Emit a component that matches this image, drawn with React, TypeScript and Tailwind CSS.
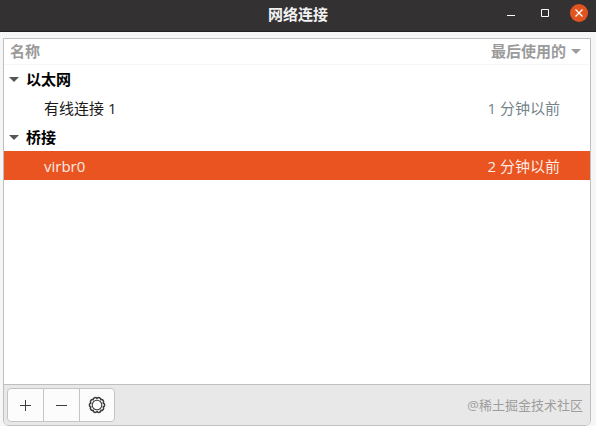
import React from 'react';

interface Connection {
    name: string;
    lastUsed: string;
}

interface ConnectionGroup {
    label: string;
    connections: Connection[];
}

const groups: ConnectionGroup[] = [
    { label: '以太网', connections: [{ name: '有线连接 1', lastUsed: '1 分钟以前' }] },
    { label: '桥接', connections: [{ name: 'virbr0', lastUsed: '2 分钟以前' }] }
];

const SELECTED = 'virbr0';

const Arrow: React.FC<{ className?: string }> = ({ className }) => (
    <svg viewBox="0 0 10 6" className={`w-[10px] h-[6px] shrink-0 ${className ?? ''}`} fill="currentColor" aria-hidden="true">
        <path d="M0 1h10L5 6z" />
    </svg>
);

const GearIcon = () => {
    // scalloped rim around an inner ring
    const teeth = Array.from({ length: 10 }, (_, i) => {
        const a = (i * Math.PI) / 5 + Math.PI / 10;
        return { x: 9 + 6.6 * Math.cos(a), y: 9 + 6.6 * Math.sin(a) };
    });
    const outline = teeth
        .map((p, i) => (i === 0 ? `M${p.x} ${p.y}` : `A2.2 2.2 0 0 1 ${p.x} ${p.y}`))
        .join(' ') + ` A2.2 2.2 0 0 1 ${teeth[0].x} ${teeth[0].y}Z`;

    return (
        <svg viewBox="0 0 18 18" className="size-[18px]" fill="none" stroke="#3d3d3d" aria-hidden="true">
            <path d={outline} strokeWidth="1.5" />
            <circle cx="9" cy="9" r="4.8" strokeWidth="1.1" />
        </svg>
    );
};

const TitleBar = () => (
    <header className="h-8 shrink-0 grid grid-cols-[1fr_auto_1fr] items-center bg-[#333132] border-b border-[#201e1f] text-white">
        <h1 className="col-start-2 text-[15px] leading-5 font-bold text-[#f2f2f2] pb-1">网络连接</h1>
        <div className="flex justify-end items-center gap-4 pr-2 pb-[5px]">
            <button aria-label="最小化" className="size-[18px] flex items-center justify-center">
                <svg viewBox="0 0 18 18" className="size-[18px]" aria-hidden="true">
                    <path d="M5 11.5h8" stroke="#fff" />
                </svg>
            </button>
            <button aria-label="最大化" className="size-[18px] flex items-center justify-center">
                <svg viewBox="0 0 18 18" className="size-[18px]" fill="none" aria-hidden="true">
                    <path d="M5.5 5.5h7v7h-7z" stroke="#fff" />
                </svg>
            </button>
            <button aria-label="关闭" className="size-[18px] flex items-center justify-center rounded-full bg-[#e2541f]">
                <svg viewBox="0 0 18 18" className="size-[18px]" aria-hidden="true">
                    <path d="M5.5 5.5l7 7M12.5 5.5l-7 7" stroke="#fff" strokeWidth="1.3" />
                </svg>
            </button>
        </div>
    </header>
);

const ConnectionTable = () => (
    <table className="w-full border-collapse">
        <thead>
            <tr className="h-[25px] text-[#9b9b9b] border-b border-[#f6f6f6]">
                <th className="p-0 pl-[6px] text-left font-bold">名称</th>
                <th className="p-0 pr-[9px] font-bold">
                    <button className="flex items-center gap-[5px] ml-auto font-bold">
                        最后使用的
                        <Arrow />
                    </button>
                </th>
            </tr>
        </thead>
        {groups.map(group => (
            <tbody key={group.label}>
                <tr className="h-[29px]">
                    <th colSpan={2} className="p-0 pl-[5px] font-bold text-black">
                        <button className="flex items-center gap-[7px] font-bold">
                            <Arrow className="text-[#555]" />
                            {group.label}
                        </button>
                    </th>
                </tr>
                {group.connections.map(item => (
                    <tr
                        key={item.name}
                        className={`h-[29px] ${item.name === SELECTED ? 'bg-[#e95420] text-[#fdebe3]' : 'text-[#1a1a1a]'}`}
                    >
                        <td className="p-0 pl-10">{item.name}</td>
                        <td className={`p-0 pr-[30px] text-right ${item.name === SELECTED ? '' : 'text-[#75838b]'}`}>
                            {item.lastUsed}
                        </td>
                    </tr>
                ))}
            </tbody>
        ))}
    </table>
);

const ActionBar = () => (
    <footer className="flex items-center justify-between p-[3px] pr-[7px] bg-[#e8e8e8] border-t border-[#bfbfbf]">
        <div className="flex h-[34px] rounded border border-[#c4c4c4] bg-[#fcfcfc] divide-x divide-[#c4c4c4]">
            <button aria-label="添加" className="w-9 flex items-center justify-center">
                <svg viewBox="0 0 11 11" className="size-[11px]" stroke="#3d3d3d" aria-hidden="true">
                    <path d="M0 5.5h11M5.5 0v11" />
                </svg>
            </button>
            <button aria-label="删除" className="w-9 flex items-center justify-center">
                <svg viewBox="0 0 11 11" className="size-[11px]" stroke="#3d3d3d" aria-hidden="true">
                    <path d="M0 5.5h11" />
                </svg>
            </button>
            <button aria-label="设置" className="w-[34px] flex items-center justify-center">
                <GearIcon />
            </button>
        </div>
        <span className="text-[13px] leading-5 text-[#9d9d9d]">@稀土掘金技术社区</span>
    </footer>
);

export default function App() {
    return (
        <div className="min-h-screen flex flex-col bg-[#f6f6f6] text-[15px] leading-5 font-['Open_Sans','Noto_Sans_CJK_SC',sans-serif]">
            <TitleBar />
            <main className="flex-1 flex flex-col mt-[6px] ml-[3px] mr-[5px] border border-[#bfbfbf] rounded-b-md overflow-hidden bg-white">
                <div className="flex-1">
                    <ConnectionTable />
                </div>
                <ActionBar />
            </main>
        </div>
    );
}
